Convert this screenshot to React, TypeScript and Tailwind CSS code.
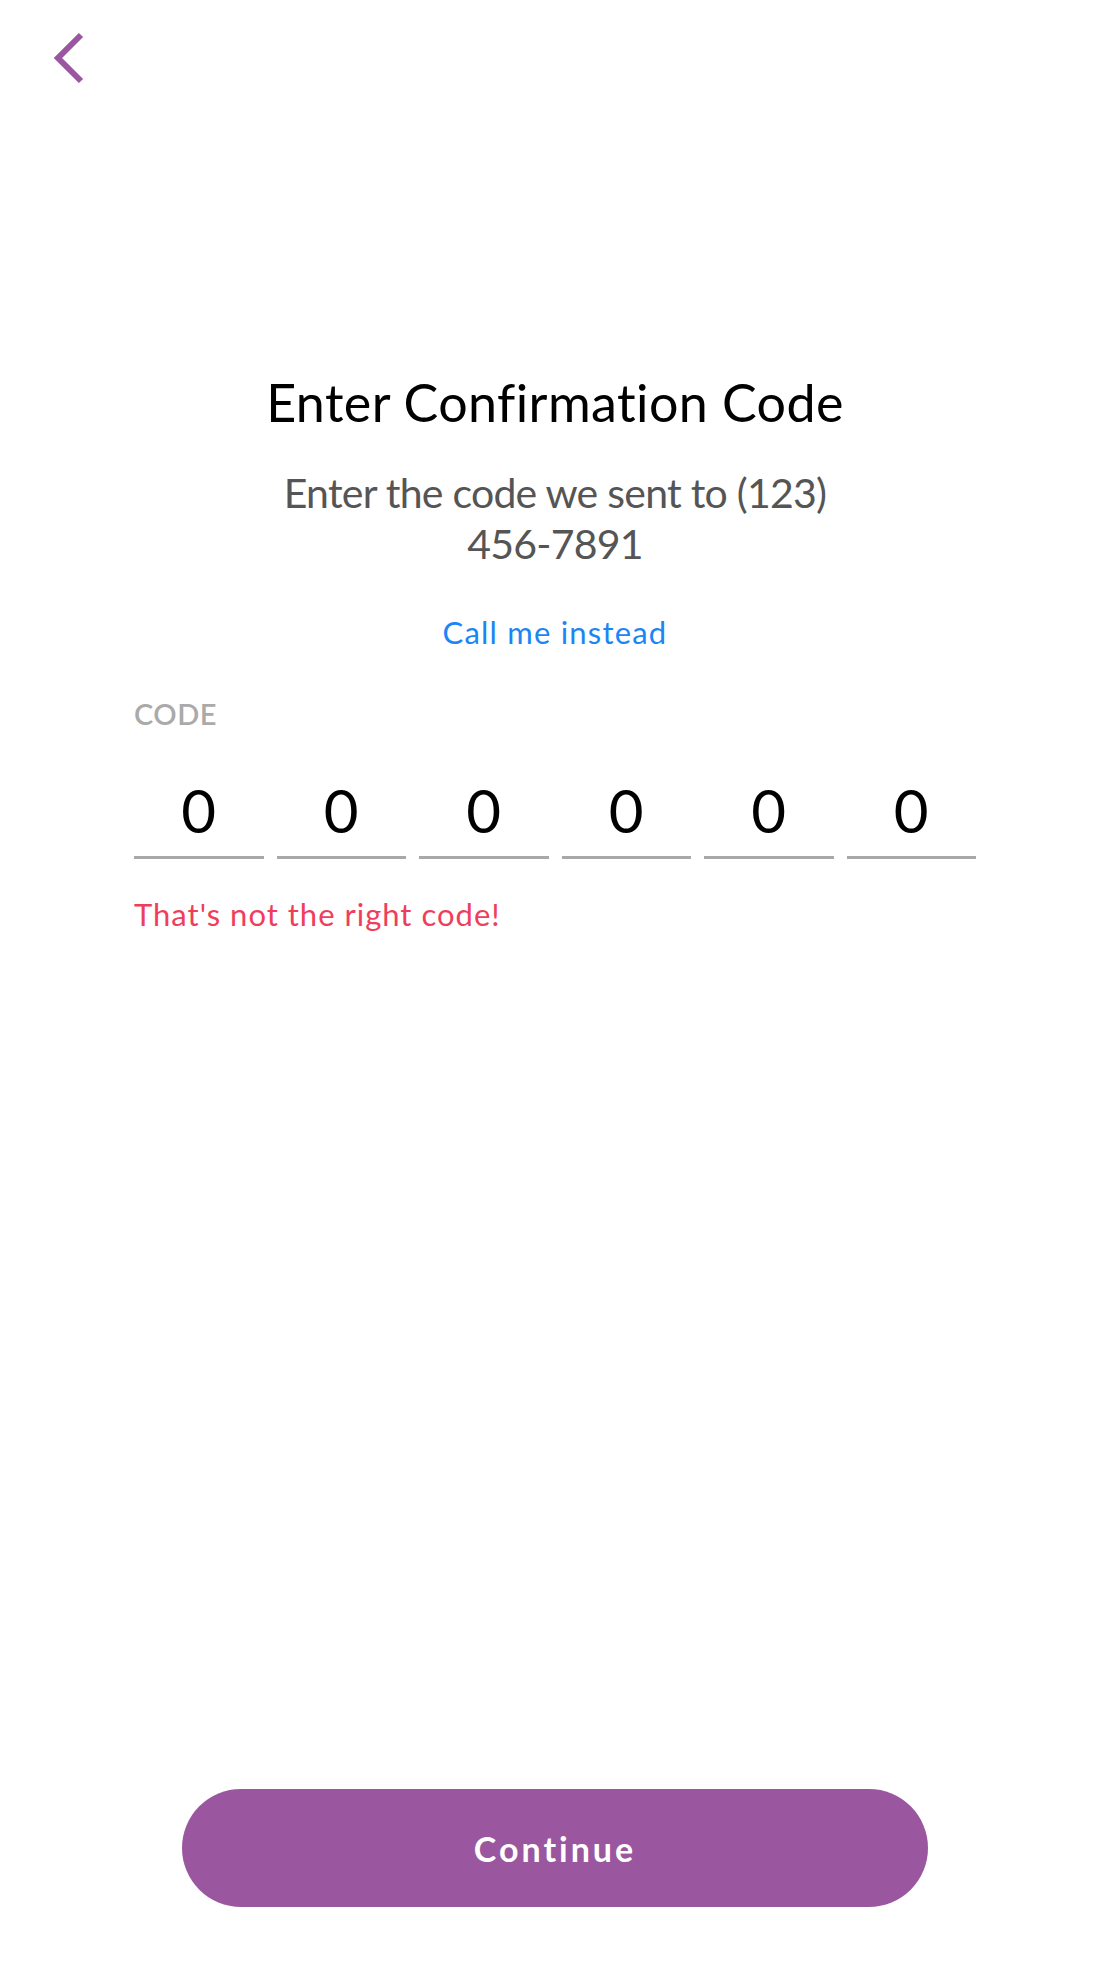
import { useState } from "react"

const digits = ["0", "0", "0", "0", "0", "0"]

export default function App() {
  const [code] = useState(digits)

  return (
    <div className="min-h-[1974px] bg-white flex flex-col font-['Lato',sans-serif]">

      {/* Back */}
      <div className="pt-[30px] pl-[50px] h-[90px]">
        <button className="block w-[40px] h-[56px]">
          <svg width="40" height="56" viewBox="0 0 40 56" fill="none">
            <path d="M31 5 L8 28 L31 51" stroke="#9a57a0" strokeWidth="6" />
          </svg>
        </button>
      </div>

      {/* Heading */}
      <div className="flex flex-col items-center mt-[286px]">
        <h1 className="text-[52px] leading-none text-black tracking-[0.4px]">
          Enter Confirmation Code
        </h1>
        <p className="mt-[39px] text-[41px] leading-[51px] text-[#555555] text-center w-[600px] tracking-[-0.75px]">
          Enter the code we sent to (123) 456-7891
        </p>
        <button className="mt-[48px] text-[31px] leading-none text-[#1a86f5] tracking-[1.2px]">
          Call me instead
        </button>
      </div>

      {/* Code */}
      <div className="w-[842px] mx-auto mt-[51px]">
        <div className="text-[29px] leading-none font-semibold text-[#aaaaaa] tracking-[0.5px]">
          CODE
        </div>

        <div className="mt-[52px] grid grid-cols-6 gap-[13px]">
          {code.map((d, i) => (
            <div
              key={i}
              className="h-[79px] border-b-[3px] border-[#a8a8a8] text-center text-[60px] leading-none text-black"
            >
              {d}
            </div>
          ))}
        </div>

        <p className="mt-[40px] text-[31px] leading-none text-[#ef3e5c] tracking-[1px]">
          That's not the right code!
        </p>
      </div>

      <div className="flex-1" />

      {/* Continue */}
      <div className="flex justify-center mb-[67px]">
        <button className="w-[746px] h-[118px] rounded-full bg-[#9a57a0] text-white text-[34px] font-bold tracking-[3px]">
          Continue
        </button>
      </div>

    </div>
  )
}
